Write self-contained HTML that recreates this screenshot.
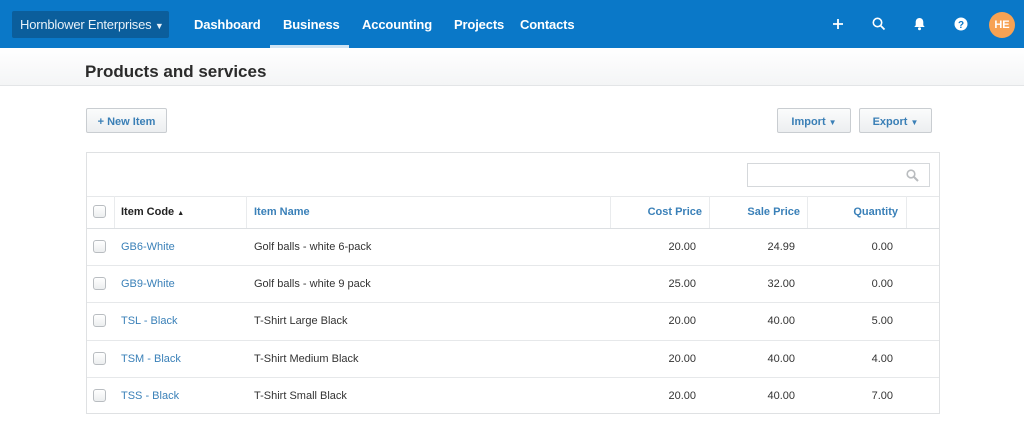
<!DOCTYPE html>
<html><head><meta charset="utf-8"><style>
*{box-sizing:border-box;margin:0;padding:0}
body{width:1024px;height:434px;overflow:hidden;background:#fff;font-family:"Liberation Sans",Arial,sans-serif;font-size:11px;color:#333;position:relative}
.nav{position:absolute;left:0;top:0;width:1024px;height:48px;background:#0a78c8}
.org{position:absolute;left:12px;top:11px;width:157px;height:27px;background:#0b5e9c;border-radius:2px;color:#e8f1f8;font-size:13px;line-height:27px;padding-left:8px;letter-spacing:-0.2px}
.nl{position:absolute;top:17px;color:#fff;font-weight:bold;font-size:13px;letter-spacing:-0.15px}
.ul{position:absolute;left:270px;top:45px;width:79px;height:3px;background:#cfe3f3}
.band{position:absolute;left:0;top:48px;width:1024px;height:38px;background:linear-gradient(#fff,#f4f5f6);border-bottom:1px solid #e3e5e7}
h1{position:absolute;left:85px;top:62px;font-size:17px;font-weight:bold;color:#2b2b2b}
.btn{position:absolute;top:108px;height:25px;border:1px solid #c9cdd1;border-radius:2px;background:linear-gradient(#fbfcfc,#eceef0);color:#3a7fb6;font-weight:bold;font-size:11px;text-align:center;line-height:24px;padding-top:1px}
.box{position:absolute;left:86px;top:152px;width:854px;height:262px;border:1px solid #dfe1e3}
.search{position:absolute;left:747px;top:163px;width:183px;height:24px;border:1px solid #d5d8db}
.cell{position:absolute;font-size:11px}
.cb{position:absolute;left:93px;width:13px;height:13px;border:1px solid #b9bdc1;border-radius:3px;background:linear-gradient(#fff,#eceeef)}
.hl{position:absolute;left:87px;width:852px;height:1px;background:#e6e8ea}
.vs{position:absolute;top:196px;width:1px;height:32px;background:#e9ebed}
.blue{color:#3a80b8}
.r{text-align:right}
</style></head><body>
<div class="nav">
<div class="org">Hornblower Enterprises <span style="font-size:9px">▼</span></div>
<div class="nl" style="left:194px">Dashboard</div>
<div class="nl" style="left:283px">Business</div>
<div class="nl" style="left:362px">Accounting</div>
<div class="nl" style="left:454px">Projects</div>
<div class="nl" style="left:520px">Contacts</div>
<div class="ul"></div>
<svg style="position:absolute;left:832px;top:18px" width="12" height="12"><path d="M6 1v10M1 6h10" stroke="#fff" stroke-width="1.8"/></svg>
<svg style="position:absolute;left:872px;top:17px" width="14" height="14"><circle cx="5.5" cy="5.5" r="4.2" stroke="#fff" stroke-width="1.6" fill="none"/><path d="M8.5 8.5l4 4" stroke="#fff" stroke-width="1.8"/></svg>
<svg style="position:absolute;left:913px;top:17px" width="13" height="14"><path d="M6.5 1c-2.5 0-3.8 2-3.8 4.2v3L1.3 10h10.4L10.3 8.2v-3C10.3 3 9 1 6.5 1z" fill="#fff"/><circle cx="6.5" cy="11.8" r="1.5" fill="#fff"/></svg>
<svg style="position:absolute;left:954px;top:17px" width="14" height="14"><circle cx="7" cy="7" r="6.5" fill="#fff"/><text x="7" y="11" text-anchor="middle" font-size="10" font-weight="bold" fill="#0a78c8" font-family="Liberation Sans">?</text></svg>
<div style="position:absolute;left:989px;top:12px;width:26px;height:26px;border-radius:50%;background:#f7a253;color:#fff;font-weight:bold;font-size:11px;text-align:center;line-height:26px">HE</div>
</div>
<div class="band"></div>
<h1>Products and services</h1>
<div class="btn" style="left:86px;width:81px">+ New Item</div>
<div class="btn" style="left:777px;width:74px">Import <span style="font-size:8px">▼</span></div>
<div class="btn" style="left:859px;width:73px">Export <span style="font-size:8px">▼</span></div>
<div class="box"></div>
<div class="search"><svg style="position:absolute;left:158px;top:5px" width="13" height="13"><circle cx="5" cy="5" r="3.8" stroke="#b9bcbf" stroke-width="1.6" fill="none"/><path d="M8 8l4 4" stroke="#b9bcbf" stroke-width="2"/></svg></div>
<div class="hl" style="top:196px"></div>
<div class="hl" style="top:228px;background:#dcdfe2"></div>
<div class="hl" style="top:265px"></div>
<div class="hl" style="top:302px"></div>
<div class="hl" style="top:340px"></div>
<div class="hl" style="top:377px"></div>
<div class="vs" style="left:114px"></div><div class="vs" style="left:246px"></div><div class="vs" style="left:610px"></div><div class="vs" style="left:709px"></div><div class="vs" style="left:807px"></div><div class="vs" style="left:906px"></div>
<div class="cb" style="top:205px"></div>
<div class="cell" style="left:121px;top:206px;font-weight:bold;color:#222">Item Code <span style="font-size:7px">▲</span></div>
<div class="cell blue" style="left:254px;top:206px;font-weight:bold">Item Name</div>
<div class="cell blue r" style="left:602px;width:100px;top:206px;font-weight:bold">Cost Price</div>
<div class="cell blue r" style="left:700px;width:100px;top:206px;font-weight:bold">Sale Price</div>
<div class="cell blue r" style="left:798px;width:100px;top:206px;font-weight:bold">Quantity</div>

<div class="cb" style="top:240px"></div><div class="cell blue" style="left:121px;top:241px">GB6-White</div><div class="cell" style="left:254px;top:241px">Golf balls - white 6-pack</div><div class="cell r" style="left:596px;width:100px;top:241px">20.00</div><div class="cell r" style="left:695px;width:100px;top:241px">24.99</div><div class="cell r" style="left:793px;width:100px;top:241px">0.00</div>
<div class="cb" style="top:277px"></div><div class="cell blue" style="left:121px;top:278px">GB9-White</div><div class="cell" style="left:254px;top:278px">Golf balls - white 9 pack</div><div class="cell r" style="left:596px;width:100px;top:278px">25.00</div><div class="cell r" style="left:695px;width:100px;top:278px">32.00</div><div class="cell r" style="left:793px;width:100px;top:278px">0.00</div>
<div class="cb" style="top:314px"></div><div class="cell blue" style="left:121px;top:315px">TSL - Black</div><div class="cell" style="left:254px;top:315px">T-Shirt Large Black</div><div class="cell r" style="left:596px;width:100px;top:315px">20.00</div><div class="cell r" style="left:695px;width:100px;top:315px">40.00</div><div class="cell r" style="left:793px;width:100px;top:315px">5.00</div>
<div class="cb" style="top:352px"></div><div class="cell blue" style="left:121px;top:353px">TSM - Black</div><div class="cell" style="left:254px;top:353px">T-Shirt Medium Black</div><div class="cell r" style="left:596px;width:100px;top:353px">20.00</div><div class="cell r" style="left:695px;width:100px;top:353px">40.00</div><div class="cell r" style="left:793px;width:100px;top:353px">4.00</div>
<div class="cb" style="top:389px"></div><div class="cell blue" style="left:121px;top:390px">TSS - Black</div><div class="cell" style="left:254px;top:390px">T-Shirt Small Black</div><div class="cell r" style="left:596px;width:100px;top:390px">20.00</div><div class="cell r" style="left:695px;width:100px;top:390px">40.00</div><div class="cell r" style="left:793px;width:100px;top:390px">7.00</div>
</body></html>
